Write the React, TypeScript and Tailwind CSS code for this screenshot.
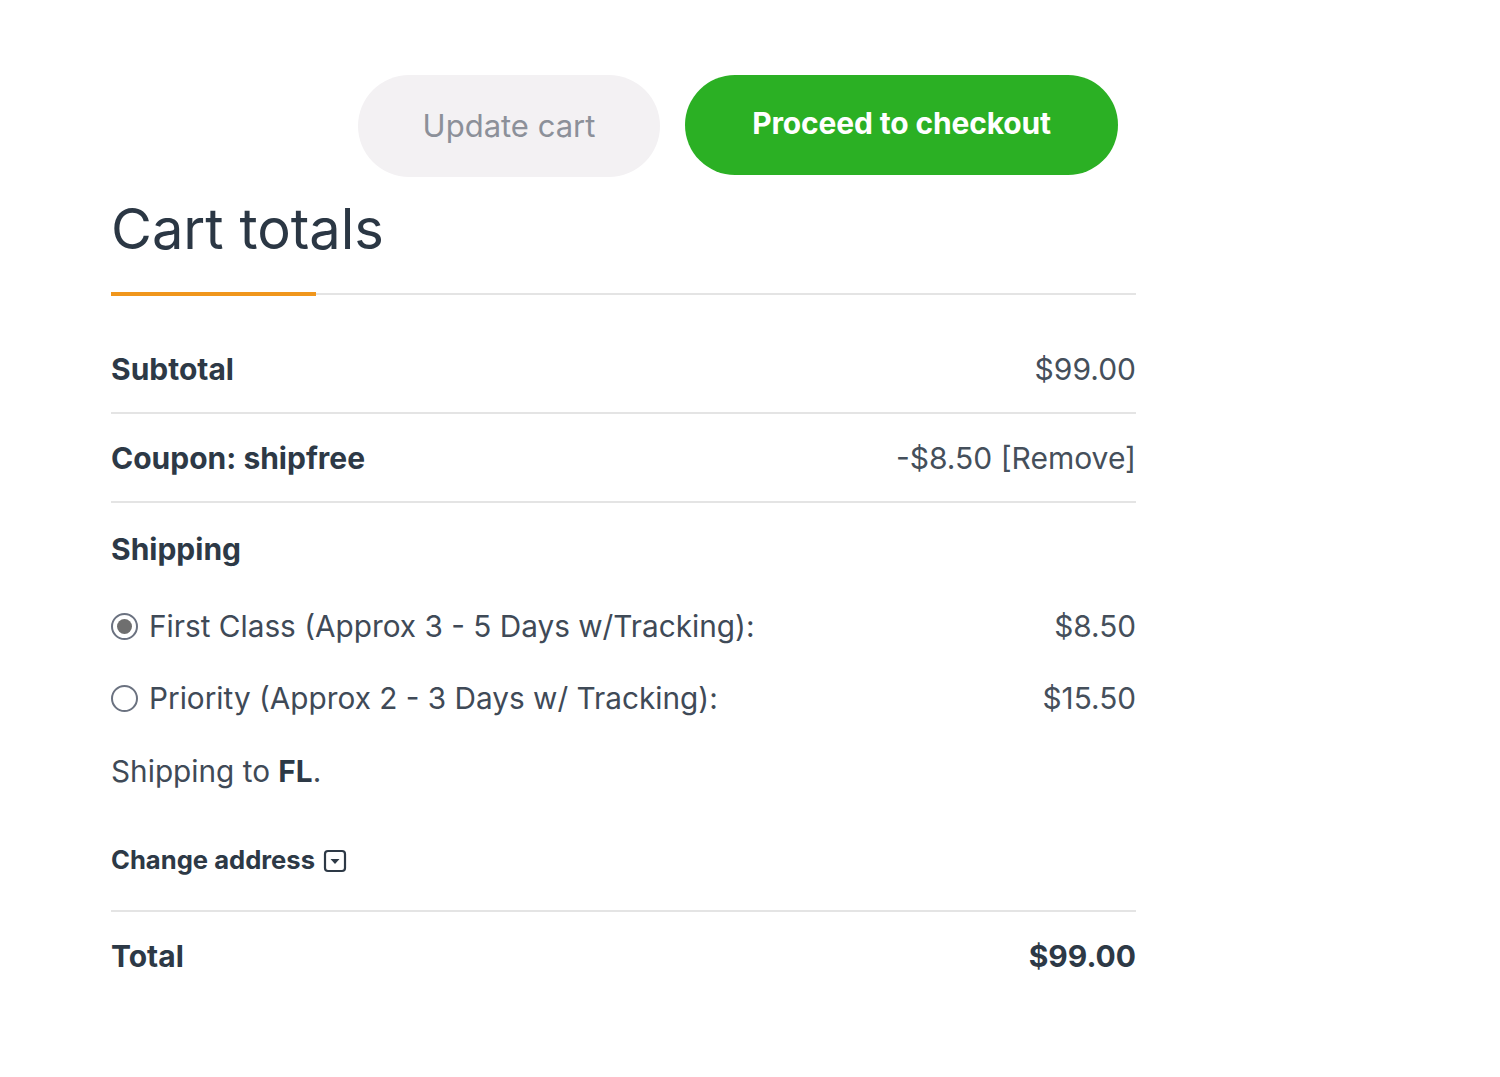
import { useState } from "react";

const shippingOptions = [
  { id: "first", label: "First Class (Approx 3 - 5 Days w/Tracking):", price: "$8.50" },
  { id: "priority", label: "Priority (Approx 2 - 3 Days w/ Tracking):", price: "$15.50" },
];

function Radio({ checked }: { checked: boolean }) {
  return (
    <span className="flex h-[27px] w-[27px] shrink-0 items-center justify-center rounded-full border-2 border-[#6b7280] bg-white">
      {checked && <span className="h-[15px] w-[15px] rounded-full bg-[#6f6f6f]" />}
    </span>
  );
}

export default function App() {
  const [method, setMethod] = useState("first");

  return (
    <div className="min-h-screen bg-white font-['Inter',sans-serif] text-[#2d3946]">
      <div className="ml-[111px] w-[1025px] pt-[75px]">
        <div className="flex justify-end gap-[25px] pr-[18px]">
          <button className="h-[102px] w-[302px] rounded-full bg-[#f3f1f3] text-[31px] text-[#8c9099]">
            Update cart
          </button>
          <button className="h-[100px] w-[433px] rounded-full bg-[#2bb024] pb-[4px] text-[30px] font-bold tracking-[-0.005em] text-white">
            Proceed to checkout
          </button>
        </div>

        <h2 className="mt-[20px] text-[56px] leading-[64px] font-normal text-[#2b3744]">Cart totals</h2>
        <div className="relative mt-[32px] h-[2px] bg-[#e4e4e4]">
          <div className="absolute left-0 top-[-1px] h-[4px] w-[205px] bg-[#f0961c]" />
        </div>

        <div className="mt-[30px]">
          <div className="flex h-[89px] items-center justify-between border-b-2 border-[#e4e4e4] pt-[2px]">
            <span className="text-[30px] font-bold">Subtotal</span>
            <span className="text-[30px] text-[#454f5b]">$99.00</span>
          </div>
          <div className="flex h-[89px] items-center justify-between border-b-2 border-[#e4e4e4] pt-[2px]">
            <span className="text-[30px] font-bold">Coupon: shipfree</span>
            <span className="text-[30px] text-[#454f5b]">
              -$8.50 <a className="cursor-pointer">[Remove]</a>
            </span>
          </div>

          <div className="border-b-2 border-[#e4e4e4] pt-[28px] pb-[32px]">
            <div className="text-[30px] leading-[36px] font-bold">Shipping</div>
            <ul className="mt-[41px] flex flex-col gap-[36px]">
              {shippingOptions.map((o) => (
                <li
                  key={o.id}
                  className="flex h-[36px] cursor-pointer items-center justify-between text-[29.75px] text-[#3f4a57]"
                  onClick={() => setMethod(o.id)}
                >
                  <span className="flex items-center gap-[11px]">
                    <Radio checked={method === o.id} />
                    {o.label}
                  </span>
                  <span className="text-[#454f5b]">{o.price}</span>
                </li>
              ))}
            </ul>
            <p className="mt-[37px] text-[29.75px] leading-[36px] text-[#3f4a57]">
              Shipping to <strong className="font-bold text-[#2d3946]">FL</strong>.
            </p>
            <button className="mt-[53px] flex items-center gap-[8px] text-[25.6px] leading-[36px] font-bold">
              Change address
              <svg width="24" height="24" viewBox="0 0 24 24" className="mt-[2px]">
                <rect x="2" y="2" width="20" height="20" rx="3" fill="none" stroke="#2d3946" strokeWidth="2.2" />
                <path d="M7.5 10 L16.5 10 L12 15 Z" fill="#2d3946" />
              </svg>
            </button>
          </div>

          <div className="flex h-[89px] items-center justify-between">
            <span className="text-[30px] font-bold">Total</span>
            <span className="text-[30px] font-bold">$99.00</span>
          </div>
        </div>
      </div>
    </div>
  );
}
